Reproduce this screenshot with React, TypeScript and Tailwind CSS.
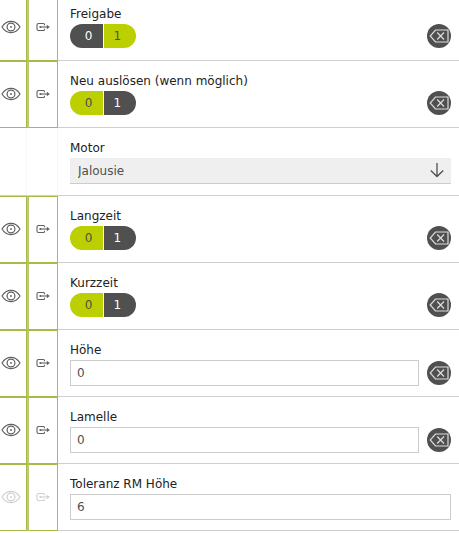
import { useState } from 'react'
import clsx from 'clsx'

type Row = {
  id: string
  label: string
  kind: 'switch' | 'select' | 'number'
  value: string
  clearable?: boolean
  linked?: boolean
  muted?: boolean
}

const rows: Row[] = [
  { id: 'freigabe', label: 'Freigabe', kind: 'switch', value: '1', clearable: true, linked: true },
  { id: 'neu', label: 'Neu auslösen (wenn möglich)', kind: 'switch', value: '0', clearable: true, linked: true },
  { id: 'motor', label: 'Motor', kind: 'select', value: 'Jalousie' },
  { id: 'langzeit', label: 'Langzeit', kind: 'switch', value: '0', clearable: true, linked: true },
  { id: 'kurzzeit', label: 'Kurzzeit', kind: 'switch', value: '0', clearable: true, linked: true },
  { id: 'hoehe', label: 'Höhe', kind: 'number', value: '0', clearable: true, linked: true },
  { id: 'lamelle', label: 'Lamelle', kind: 'number', value: '0', clearable: true, linked: true },
  { id: 'toleranz', label: 'Toleranz RM Höhe', kind: 'number', value: '6', linked: true, muted: true },
]

function EyeIcon() {
  return (
    <svg width="20" height="14" viewBox="0 0 20 14" fill="none" stroke="currentColor" strokeWidth="1.2">
      <path d="M1 7C3.4 3.2 6.4 1.4 10 1.4S16.6 3.2 19 7C16.6 10.8 13.6 12.6 10 12.6S3.4 10.8 1 7Z" />
      <circle cx="10" cy="7" r="3.9" />
      <circle cx="10" cy="7" r="0.9" fill="currentColor" stroke="none" />
    </svg>
  )
}

function OutputIcon() {
  return (
    <svg width="14" height="10" viewBox="0 0 14 10" fill="none" stroke="currentColor" strokeWidth="1.1">
      <path d="M8.500 3.300V2.500Q8.500 1.500 7.500 1.500H2.500Q1 1.500 1 3V7Q1 8.500 2.500 8.500H7.500Q8.500 8.500 8.500 7.500V6.700" />
      <path d="M4 5H12" />
      <path d="M10.800 2.800L13.800 5L10.800 7.200Z" fill="currentColor" stroke="none" />
      <circle cx="4.300" cy="5" r="1" fill="currentColor" stroke="none" />
    </svg>
  )
}

function ClearIcon() {
  return (
    <svg width="20" height="14" viewBox="0 0 20 14" fill="none" stroke="currentColor" strokeWidth="1.2">
      <path d="M6.500 1H19V13H6.500L1.200 7Z" />
      <path d="M8.200 3.500L15 10.500M15 3.500L8.200 10.500" />
    </svg>
  )
}

function Switch({ id, value, onChange }: { id: string; value: string; onChange: (v: string) => void }) {
  return (
    <div role="group" aria-labelledby={`${id}-label`} className="flex h-6 w-[66px] gap-px overflow-hidden rounded-full">
      {['0', '1'].map((v) => (
        <button
          key={v}
          type="button"
          aria-pressed={value === v}
          onClick={() => onChange(v)}
          className={clsx(
            'flex flex-1 items-center',
            v === '0' ? 'justify-end pr-2.5' : 'justify-start pl-2.5',
            value === v ? 'bg-[#bccf00] text-[#505050]' : 'bg-[#505050] text-white',
          )}
        >
          {v}
        </button>
      ))}
    </div>
  )
}

function SettingRow({ row }: { row: Row }) {
  const [value, setValue] = useState(row.value)
  // linked cells cover the grey row line with their own green border
  const cell = clsx(
    'flex shrink-0 items-center justify-center border-r pb-0.5',
    row.linked ? '-mb-px border-y border-[#a8bb48]' : 'border-[#f7f7f7]',
    row.muted ? 'text-[#d0d0d0]' : 'text-[#606060]',
  )

  return (
    <div className={clsx('flex border-b border-[#cfcfcf]', row.kind === 'select' ? 'h-[68px]' : 'h-[67px]')}>
      <div className={clsx(cell, 'w-[27px] pr-1')}>
        {row.linked && (
          <button type="button" aria-label={`${row.label} anzeigen`} disabled={row.muted}>
            <EyeIcon />
          </button>
        )}
      </div>
      <div className={clsx(cell, 'w-[31px]', row.linked && 'border-l-2 border-l-[#bccb70]')}>
        {row.linked && (
          <button type="button" aria-label={`${row.label} ausgeben`} disabled={row.muted}>
            <OutputIcon />
          </button>
        )}
      </div>
      <div className="min-w-0 flex-1 pt-3 pr-2 pl-3">
        {row.kind === 'switch' ? (
          <div id={`${row.id}-label`} className="h-[18px] leading-4 text-[#222222]">{row.label}</div>
        ) : (
          <label htmlFor={row.id} className="block h-[18px] leading-4 text-[#222222]">{row.label}</label>
        )}
        <div className="flex items-center gap-2">
          <div className="relative min-w-0 flex-1">
            {row.kind === 'switch' && <Switch id={row.id} value={value} onChange={setValue} />}
            {row.kind === 'select' && (
              <>
                <select
                  id={row.id}
                  value={value}
                  onChange={(e) => setValue(e.target.value)}
                  className="block h-[26px] w-full appearance-none border-b border-[#cccccc] bg-[#efefef] px-2 text-[#505050]"
                >
                  <option>Jalousie</option>
                  <option>Rollladen</option>
                </select>
                <svg className="pointer-events-none absolute top-1 right-[7px]" width="14" height="16" viewBox="0 0 14 16" fill="none" stroke="#505050" strokeWidth="1.3">
                  <path d="M7 1V14.500M0.800 8.500L7 14.500L13.200 8.500" />
                </svg>
              </>
            )}
            {row.kind === 'number' && (
              <input
                id={row.id}
                type="text"
                value={value}
                onChange={(e) => setValue(e.target.value)}
                className="block h-[26px] w-full border border-[#cccccc] bg-white px-1.5 text-[#505050]"
              />
            )}
          </div>
          {row.clearable && (
            <button
              type="button"
              aria-label={`${row.label} zurücksetzen`}
              className="flex size-6 shrink-0 items-center justify-center rounded-full bg-[#505050] text-[#dddddd]"
            >
              <ClearIcon />
            </button>
          )}
        </div>
      </div>
    </div>
  )
}

export default function App() {
  return (
    <main className="overflow-hidden bg-white font-['DejaVu_Sans',sans-serif] text-[12px]">
      <form className="-mt-1.5">
        {rows.map((row) => (
          <SettingRow key={row.id} row={row} />
        ))}
      </form>
    </main>
  )
}
